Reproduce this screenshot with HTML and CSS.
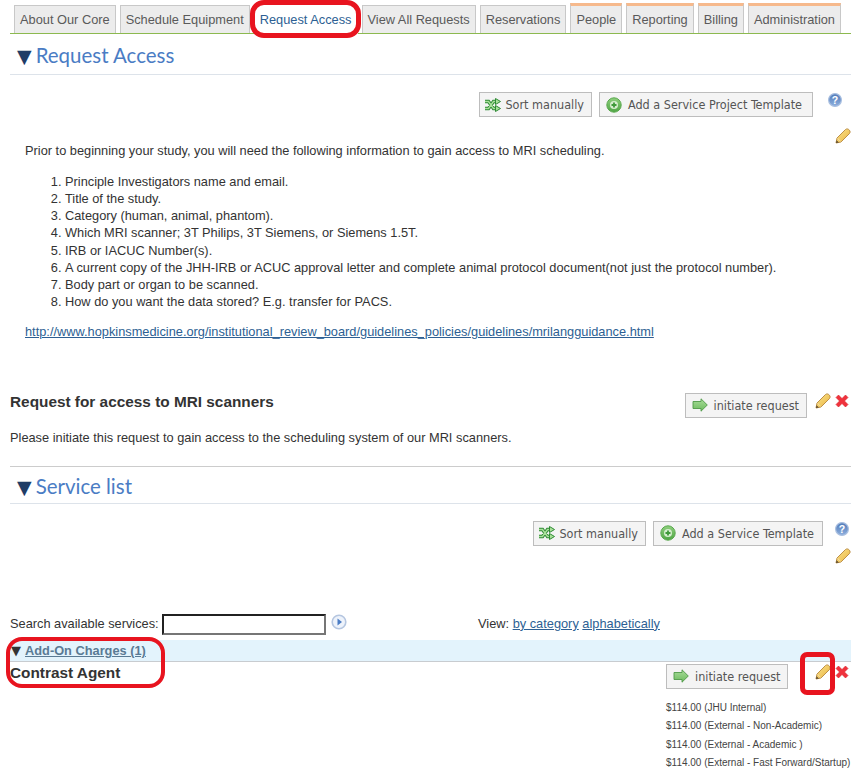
FILE: index.html
```html
<!DOCTYPE html>
<html lang="en">
<head>
<meta charset="utf-8">
<title>Request Access</title>
<link rel="stylesheet" href="styles.css">
</head>
<body>
<svg class="defs" width="0" height="0" aria-hidden="true">
  <defs>
    <linearGradient id="helpfill" x1="0" y1="0" x2="0" y2="1">
      <stop offset="0" stop-color="#4f79b8"/>
      <stop offset="1" stop-color="#8fb0de"/>
    </linearGradient>
    <linearGradient id="plusfill" x1="0" y1="0" x2="0" y2="1">
      <stop offset="0" stop-color="#8fd07e"/>
      <stop offset="1" stop-color="#4fa544"/>
    </linearGradient>
    <linearGradient id="pencilfill" x1="0" y1="0" x2="1" y2="1">
      <stop offset="0" stop-color="#fbe58f"/>
      <stop offset="1" stop-color="#e9b33f"/>
    </linearGradient>
    <linearGradient id="arrowfill" x1="0" y1="0" x2="0" y2="1">
      <stop offset="0" stop-color="#a8dc9a"/>
      <stop offset="1" stop-color="#6dbb5e"/>
    </linearGradient>
    <symbol id="pencil" viewBox="0 0 16 16">
      <path d="M1 15l1-5 8.500-8.500c1-.8 2.200-.8 3.200 0l.8.8c.8 1 .8 2.200 0 3.200L6 14z" fill="url(#pencilfill)" stroke="#b5863a" stroke-width=".9"/>
      <path d="M2.500 10.300l3.200 3.200" stroke="#f7dfa8" stroke-width="1" fill="none"/>
      <path d="M1 15l.6-2.800 2.200 2.200z" fill="#5a4a30"/>
    </symbol>
    <symbol id="cross" viewBox="0 0 14 14">
      <path d="M1 3.500L3.500 1 7 4.500 10.500 1 13 3.500 9.500 7 13 10.500 10.500 13 7 9.500 3.500 13 1 10.500 4.500 7z" fill="#f0323c" stroke="#d8232c" stroke-width=".6"/>
    </symbol>
    <symbol id="arrow" viewBox="0 0 16 14">
      <path d="M1 3.500h8V.8L15.300 7 9 13.200v-2.700H1z" fill="url(#arrowfill)" stroke="#4f9a48" stroke-width=".9"/>
    </symbol>
    <symbol id="plus" viewBox="0 0 16 16">
      <circle cx="8" cy="8" r="7.200" fill="url(#plusfill)" stroke="#5aa84e" stroke-width="1"/>
      <circle cx="8" cy="8" r="4" fill="#d6edcf"/>
      <path d="M8 5.500v5M5.500 8h5" stroke="#3f9a3a" stroke-width="1.800"/>
    </symbol>
    <symbol id="shuffle" viewBox="0 0 16 14">
      <path d="M0 3.500h3.500l5 7h2.500M0 10.500h3.500l5-7h2.500" fill="none" stroke="#2f8a35" stroke-width="3.400"/>
      <path d="M0 3.500h3.500l5 7h2.500M0 10.500h3.500l5-7h2.500" fill="none" stroke="#a9e09a" stroke-width="1.400"/>
      <path d="M10.500.5l5 3-5 3zM10.500 7.500l5 3-5 3z" fill="#a9e09a" stroke="#2f8a35" stroke-width="1"/>
    </symbol>
    <symbol id="help" viewBox="0 0 14 14">
      <circle cx="7" cy="7" r="6.400" fill="url(#helpfill)" stroke="#a9bfe0" stroke-width="1.200"/>
      <text x="7" y="10.800" text-anchor="middle" class="help-q">?</text>
    </symbol>
    <symbol id="go" viewBox="0 0 16 16">
      <circle cx="8" cy="8" r="6.800" fill="#eef3fb" stroke="#b5c6e0" stroke-width="1.600"/>
      <path d="M6.500 4.500L11 8l-4.500 3.500z" fill="#4a7cc4"/>
    </symbol>
  </defs>
</svg>

<div class="page">
  <nav class="tabs">
    <a class="tab">About Our Core</a>
    <a class="tab">Schedule Equipment</a>
    <a class="tab tab-active">Request Access</a>
    <a class="tab">View All Requests</a>
    <a class="tab">Reservations</a>
    <a class="tab tab-admin">People</a>
    <a class="tab tab-admin">Reporting</a>
    <a class="tab tab-admin">Billing</a>
    <a class="tab tab-admin">Administration</a>
  </nav>

  <h2 class="section-title"><span class="caret">▼</span>Request Access</h2>

  <div class="toolbar toolbar-first">
    <a class="btn"><svg class="ic-shuffle"><use href="#shuffle"/></svg>Sort manually</a>
    <a class="btn btn-wide"><svg class="ic-plus"><use href="#plus"/></svg>Add a Service Project Template</a>
    <div class="side-icons side-first">
      <svg class="ic-help"><use href="#help"/></svg>
      <svg class="ic-pencil"><use href="#pencil"/></svg>
    </div>
  </div>

  <div class="intro">
    <p>Prior to beginning your study, you will need the following information to gain access to MRI scheduling.</p>
    <ol>
      <li>Principle Investigators name and email.</li>
      <li>Title of the study.</li>
      <li>Category (human, animal, phantom).</li>
      <li>Which MRI scanner; 3T Philips, 3T Siemens, or Siemens 1.5T.</li>
      <li>IRB or IACUC Number(s).</li>
      <li>A current copy of the JHH-IRB or ACUC approval letter and complete animal protocol document(not just the protocol number).</li>
      <li>Body part or organ to be scanned.</li>
      <li>How do you want the data stored? E.g. transfer for PACS.</li>
    </ol>
    <a class="link">http://www.hopkinsmedicine.org/institutional_review_board/guidelines_policies/guidelines/mrilangguidance.html</a>
  </div>

  <section class="request">
    <div class="request-head">
      <h3 class="item-title">Request for access to MRI scanners</h3>
      <div class="actions">
        <a class="btn btn-init"><svg class="ic-arrow"><use href="#arrow"/></svg>initiate request</a>
        <svg class="ic-pencil"><use href="#pencil"/></svg>
        <svg class="ic-cross"><use href="#cross"/></svg>
      </div>
    </div>
    <p class="request-text">Please initiate this request to gain access to the scheduling system of our MRI scanners.</p>
  </section>

  <h2 class="section-title section-services"><span class="caret">▼</span>Service list</h2>

  <div class="toolbar toolbar-second">
    <a class="btn"><svg class="ic-shuffle"><use href="#shuffle"/></svg>Sort manually</a>
    <a class="btn btn-wide"><svg class="ic-plus"><use href="#plus"/></svg>Add a Service Template</a>
    <div class="side-icons side-second">
      <svg class="ic-help"><use href="#help"/></svg>
      <svg class="ic-pencil"><use href="#pencil"/></svg>
    </div>
  </div>

  <div class="search-row">
    <label class="search-label">Search available services:</label>
    <input class="search-input" type="text">
    <svg class="ic-go"><use href="#go"/></svg>
    <div class="view">View: <a class="link">by category</a> <a class="link">alphabetically</a></div>
  </div>

  <div class="category"><span class="cat-caret">▼</span><a class="cat-link">Add-On Charges (1)</a></div>

  <div class="service">
    <h3 class="item-title service-name">Contrast Agent</h3>
    <div class="service-right">
      <div class="actions">
        <a class="btn btn-init"><svg class="ic-arrow"><use href="#arrow"/></svg>initiate request</a>
        <svg class="ic-pencil"><use href="#pencil"/></svg>
        <svg class="ic-cross"><use href="#cross"/></svg>
      </div>
      <ul class="prices">
        <li>$114.00 (JHU Internal)</li>
        <li>$114.00 (External - Non-Academic)</li>
        <li>$114.00 (External - Academic )</li>
        <li>$114.00 (External - Fast Forward/Startup)</li>
      </ul>
    </div>
  </div>
</div>

<div class="mark mark-tab"></div>
<div class="mark mark-cat"></div>
<div class="mark mark-pencil"></div>
</body>
</html>
```
FILE: styles.css
```css
* { box-sizing: border-box; }
html, body { margin: 0; padding: 0; }
body {
  position: relative;
  height: 772px;
  overflow: hidden;
  background: #fff;
  color: #333;
  font-family: "Liberation Sans", Arial, sans-serif;
  font-size: 12.8px;
}
.defs { position: absolute; }
.help-q { font: bold 10.500px "Liberation Sans", sans-serif; fill: #fff; }

.page { padding: 0 10px; width: 861px; }

/* tabs */
.tabs {
  display: flex;
  gap: 4px;
  height: 34px;
  padding: 5px 0 0 4px;
  border-bottom: 1px solid #8cb94f;
}
.tab {
  height: 28px;
  padding: 1px 5px 0;
  line-height: 25px;
  font-size: 12.8px;
  color: #5a5a5a;
  background: #ececec;
  border: 1px solid #c8c8c8;
  border-bottom: 0;
  white-space: nowrap;
}
.tab-active {
  background: #fff;
  color: #2d5f93;
  border-color: #fff;
  height: 29px;
}
.tab-admin {
  border-top: 3px solid #f6b98c;
  line-height: 23px;
  height: 30px;
  margin-top: -2px;
  padding-top: 2px;
}

/* section titles */
.section-title {
  margin: 0;
  height: 41px;
  padding-top: 8px;
  font-family: Lato, sans-serif;
  font-weight: 400;
  font-size: 20.48px;
  line-height: 27px;
  color: #4a7cc4;
  border-bottom: 1px solid #dde3ea;
}
.caret { color: #1f3d66; font-size: 19px; margin: 0 4px 0 7px; font-family: "DejaVu Sans", sans-serif; }

/* toolbars */
.toolbar { display: flex; justify-content: flex-end; gap: 7px; position: relative; height: 25px; margin-top: 17px; }
.toolbar-first { padding-right: 38px; }
.toolbar-second { padding-right: 28px; }
.btn {
  display: inline-flex;
  align-items: center;
  height: 25px;
  padding: 0 7px 0 5px;
  font-family: "DejaVu Sans Condensed", "DejaVu Sans", sans-serif;
  font-stretch: condensed;
  font-size: 12.5px;
  color: #555;
  background: #f4f4f4;
  border: 1px solid #bdbdbd;
  white-space: nowrap;
}
.btn-wide { padding: 0 10px 0 6px; }
.toolbar-second .btn-wide { padding-right: 8px; }
.btn-init { padding: 0 7px 0 6px; flex: none; }
.ic-shuffle { width: 16px; height: 14px; margin-right: 4px; }
.ic-plus { width: 16px; height: 16px; margin-right: 6px; }
.ic-arrow { width: 16px; height: 14px; margin-right: 6px; }
.ic-help { width: 14px; height: 14px; display: block; }
.ic-pencil { width: 16px; height: 16px; display: block; flex: none; }
.ic-cross { width: 14px; height: 14px; display: block; flex: none; }
.side-icons { display: flex; flex-direction: column; align-items: flex-end; position: absolute; right: 0; top: 1px; }
.side-first .ic-help { margin-right: 9px; margin-bottom: 21px; }
.side-second .ic-help { margin-right: 2px; margin-bottom: 12px; }

/* intro */
.intro { margin-top: 25px; padding-left: 15px; line-height: 17px; color: #333; }
.intro p { margin: 0; }
.intro ol { margin: 14.2px 0 13px; padding-left: 40px; line-height: 17.1px; }
.link { color: #2d5f93; text-decoration: underline; }

/* request */
.request { margin-top: 53px; border-bottom: 1px solid #ccc; height: 74px; }
.request-head { display: flex; justify-content: space-between; height: 36px; }
.item-title { margin: 0; font-size: 15.36px; font-weight: bold; line-height: 17px; color: #333; }
.actions { display: flex; align-items: flex-start; padding-right: 2px; }
.actions .ic-pencil { margin-left: 8px; }
.actions .ic-cross { margin: 1px 0 0 4px; }
.request-text { margin: 0; line-height: 17px; }

/* service list */
.section-services { height: 37px; padding-top: 6px; }

/* search */
.search-row { display: flex; align-items: flex-start; margin-top: 68px; height: 26px; }
.search-label { line-height: 20px; width: 152px; }
.search-input { width: 164px; height: 21px; border: 2px inset #767676; background: #fff; padding: 0; margin: 0; }
.ic-go { width: 16px; height: 16px; display: block; margin-left: 5px; }
.view { position: absolute; left: 478px; line-height: 20px; }

.category {
  height: 22px;
  padding-left: 1px;
  background: #e3f3fc;
  border-bottom: 1px solid #c8ccd0;
  line-height: 22px;
}
.cat-caret { color: #333; font-size: 13px; margin-right: 4px; font-family: "DejaVu Sans", sans-serif; }
.cat-link { color: #5a7a94; font-weight: bold; text-decoration: underline; }

.service { display: flex; justify-content: space-between; }
.service-name { padding-top: 2px; }
.service-right { width: 185px; padding-top: 2px; }
.service-right .actions .ic-pencil { margin-left: 27px; }
.prices { list-style: none; margin: 10px 0 0; padding: 0; font-size: 10px; line-height: 18.5px; color: #444; white-space: nowrap; }

/* red annotation outlines, drawn over the page */
.mark { position: absolute; border: 4px solid #e8141f; pointer-events: none; }
.mark-tab { left: 250px; top: 0; width: 111px; height: 38px; border-width: 5px; border-radius: 14px; }
.mark-cat { left: 6px; top: 637px; width: 159px; height: 51px; border-radius: 16px; }
.mark-pencil { left: 800px; top: 652px; width: 35px; height: 43px; border-width: 5px; border-radius: 7px; }
```
